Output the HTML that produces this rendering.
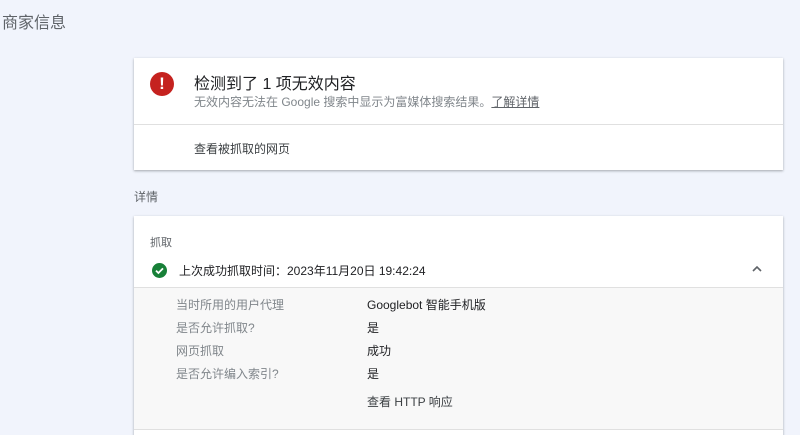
<!DOCTYPE html>
<html style="width:800px;height:435px;overflow:hidden"><head><meta charset="utf-8"><style>
*{margin:0;padding:0;box-sizing:border-box}
body{width:800px;height:435px;overflow:hidden;background:#f1f4fc;font-family:"Liberation Sans","Noto Sans CJK SC",sans-serif;position:relative;color:#202124}
.t{position:absolute;left:2px;top:9px;font-size:16px;color:#5f6368}
.card{position:absolute;left:134px;width:649px;background:#fff;box-shadow:0 1px 2px rgba(60,64,67,.3),0 1px 3px rgba(60,64,67,.15)}
.abs{position:absolute;white-space:nowrap}
</style></head><body>
<div class="t">商家信息</div>
<div class="card" style="top:58px;height:112px">
 <div class="abs" style="left:16px;top:14px;width:24px;height:24px;border-radius:50%;background:#c5221f;color:#fff;font-weight:bold;font-size:17px;text-align:center;line-height:24px">!</div>
 <div class="abs" style="left:60px;top:12px;font-size:16px;color:#202124">检测到了 1 项无效内容</div>
 <div class="abs" style="left:60px;top:35px;font-size:12px;color:#80868b">无效内容无法在 Google 搜索中显示为富媒体搜索结果。<span style="text-decoration:underline;color:#5f6368">了解详情</span></div>
 <div class="abs" style="left:0;top:66px;width:100%;height:1px;background:#e0e0e0"></div>
 <div class="abs" style="left:60px;top:82px;font-size:12px;color:#3c4043">查看被抓取的网页</div>
</div>
<div class="abs" style="left:134px;top:188px;font-size:12px;color:#5f6368">详情</div>
<div class="card" style="top:216px;height:230px">
 <div class="abs" style="left:16px;top:18px;font-size:11px;color:#5f6368">抓取</div>
 <div class="abs" style="left:18px;top:47px;width:15px;height:15px;border-radius:50%;background:#188038">
  <svg width="15" height="15" viewBox="0 0 15 15" style="position:absolute;left:0;top:0"><path d="M4 7.6l2.4 2.4 4.6-4.6" stroke="#fff" stroke-width="1.8" fill="none"/></svg>
 </div>
 <div class="abs" style="left:45px;top:46px;font-size:12px;color:#202124">上次成功抓取时间：2023年11月20日 19:42:24</div>
 <svg class="abs" style="left:617px;top:48px" width="12" height="10" viewBox="0 0 12 10"><path d="M2 7l4-4 4 4" stroke="#5f6368" stroke-width="1.6" fill="none"/></svg>
 <div class="abs" style="left:0;top:71px;width:100%;height:143px;background:#f8f8f8;border-top:1px solid #e0e0e0;border-bottom:1px solid #e0e0e0">
  <div class="abs" style="left:42px;top:6px;font-size:12px;color:#80868b;line-height:23px">当时所用的用户代理<br>是否允许抓取?<br>网页抓取<br>是否允许编入索引?</div>
  <div class="abs" style="left:233px;top:6px;font-size:12px;color:#202124;line-height:23px">Googlebot 智能手机版<br>是<br>成功<br>是</div>
  <div class="abs" style="left:233px;top:105px;font-size:12px;color:#3c4043">查看 HTTP 响应</div>
 </div>
</div>
</body></html>
